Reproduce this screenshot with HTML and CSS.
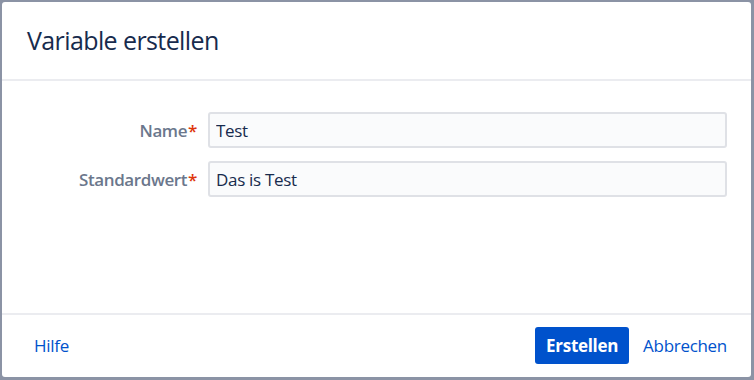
FILE: index.html
```html
<!DOCTYPE html>
<html lang="de">
<head>
<meta charset="utf-8">
<title>Variable erstellen</title>
<link rel="stylesheet" href="styles.css">
</head>
<body>
<div class="dialog">
  <header class="dialog-header">
    <h1 class="dialog-title">Variable erstellen</h1>
  </header>
  <main class="dialog-body">
    <form class="form">
      <label class="label" for="name">Name<span class="req">*</span></label>
      <input class="field" id="name" type="text" value="Test">
      <label class="label" for="std">Standardwert<span class="req">*</span></label>
      <input class="field" id="std" type="text" value="Das is Test">
    </form>
  </main>
  <footer class="dialog-footer">
    <a class="link help" href="#">Hilfe</a>
    <div class="actions">
      <button class="btn-primary" type="button">Erstellen</button>
      <a class="link" href="#">Abbrechen</a>
    </div>
  </footer>
</div>
</body>
</html>
```
FILE: styles.css
```css
* { box-sizing: border-box; }
html, body { margin: 0; height: 100%; }
body {
  background: #8b93a5;
  padding: 2px 3px 3px 2px;
  font-family: "Open Sans", "Noto Sans", sans-serif;
  color: #172b4d;
  letter-spacing: -0.3px;
}
.dialog {
  background: #fff;
  border-radius: 3px;
  height: 375px;
  display: flex;
  flex-direction: column;
}
.dialog-header {
  height: 79px;
  border-bottom: 2px solid #ebecf0;
  display: flex;
  align-items: center;
  padding: 0 25px 2px;
}
.dialog-title {
  margin: 0;
  font-size: 25px;
  font-weight: 400;
  letter-spacing: -0.6px;
  color: #172b4d;
}
.dialog-body {
  flex: 1;
  padding: 31px 24px 0 0;
}
.form {
  display: grid;
  grid-template-columns: 195px 1fr;
  column-gap: 11px;
  row-gap: 13px;
}
.label {
  text-align: right;
  align-self: center;
  font-size: 17px;
  font-weight: 600;
  letter-spacing: -0.4px;
  color: #6b778c;
}
.req { color: #de350b; margin-left: 1px; }
.field {
  height: 36px;
  border: 2px solid #dfe1e6;
  border-radius: 3px;
  background: #fafbfc;
  font-family: inherit;
  font-size: 17px;
  letter-spacing: -0.3px;
  color: #172b4d;
  padding: 0 6px;
}
.dialog-footer {
  height: 64px;
  border-top: 2px solid #ebecf0;
  display: flex;
  align-items: center;
  justify-content: space-between;
  padding: 0 24px 2px 32px;
}
.actions {
  display: flex;
  align-items: center;
  gap: 14px;
}
.link {
  color: #0052cc;
  text-decoration: none;
  font-size: 17px;
}
.btn-primary {
  background: #0052cc;
  color: #fff;
  border: 0;
  border-radius: 3px;
  height: 37px;
  width: 94px;
  font-family: inherit;
  font-size: 17px;
  font-weight: 700;
  letter-spacing: -0.3px;
}
```
